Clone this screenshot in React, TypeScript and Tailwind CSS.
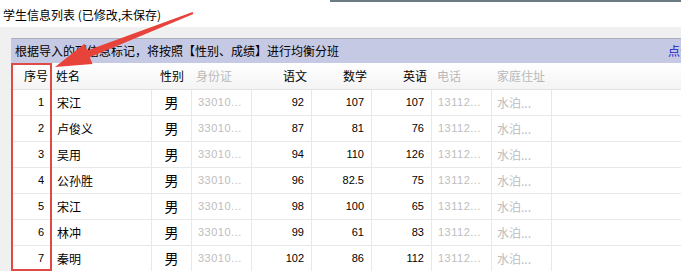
import React from "react"

const rows = [
  { no: 1, name: "宋江", chinese: "92", math: "107", english: "107" },
  { no: 2, name: "卢俊义", chinese: "87", math: "81", english: "76" },
  { no: 3, name: "吴用", chinese: "94", math: "110", english: "126" },
  { no: 4, name: "公孙胜", chinese: "96", math: "82.5", english: "75" },
  { no: 5, name: "宋江", chinese: "98", math: "100", english: "65" },
  { no: 6, name: "林冲", chinese: "99", math: "61", english: "83" },
  { no: 7, name: "秦明", chinese: "102", math: "86", english: "112" },
]

const cjk = "font-['SimSun','Noto_Sans_CJK_SC',sans-serif]"
const num = "font-['Liberation_Sans','Noto_Sans_CJK_SC',sans-serif]"
const cols = "grid grid-cols-[41px_100px_40px_60px_60px_60px_60px_60px_60px_1fr]"

function Arrow() {
  // annotation arrow pointing at the 序号 column
  return (
    <svg className="pointer-events-none absolute left-0 top-0" width="681" height="271">
      <polygon
        points="55,67 92.5,64.1 89.8,57.2 193.4,13.9 192.6,12.1 87.2,50.6 84.5,43.7"
        fill="#e8433b"
      />
    </svg>
  )
}

export default function App() {
  return (
    <div className={`relative h-[271px] w-[681px] overflow-hidden bg-white text-[12px] text-black ${cjk}`}>
      <div className="flex h-[2px]">
        <div className="w-[330px]" />
        <div className="flex-1 bg-[#6b7a83]" />
      </div>
      <div className="flex h-[25px] items-center pl-[3px]">学生信息列表 (已修改,未保存)</div>
      <div className="h-[11px] bg-[#f0f0f0]" />

      <div className="flex bg-[#f0f0f0]">
        <div className="w-[11px] shrink-0" />
        <div className="min-w-0 flex-1">
          <div className="flex h-[25px] items-center border-t border-[#a7b0bb] bg-[#c6c9e3] pl-[4px]">
            <span className="flex-1 whitespace-nowrap">根据导入的列信息标记，将按照【性别、成绩】进行均衡分班</span>
            <span className="w-[13px] shrink-0 overflow-hidden whitespace-nowrap text-[#1a1acc]">点击</span>
          </div>

          <div className={`${cols} h-[27px] items-center border-b border-[#e2e2e2] bg-gradient-to-b from-white to-[#f4f4f4]`}>
            <div className="pr-[4px] text-right">序号</div>
            <div className="pl-[4px]">姓名</div>
            <div className="text-center">性别</div>
            <div className="pl-[4px] text-[#b9b9b9]">身份证</div>
            <div className="pr-[5px] text-right">语文</div>
            <div className="pr-[5px] text-right">数学</div>
            <div className="pr-[5px] text-right">英语</div>
            <div className="pl-[5px] text-[#b9b9b9]">电话</div>
            <div className="pl-[5px] text-[#b9b9b9]">家庭住址</div>
            <div />
          </div>

          {rows.map((r) => (
            <div key={r.no} className={`${cols} h-[26px] border-b border-[#e8e8e8] bg-white`}>
              <div className={`flex items-center justify-end border-r border-[#e8e8e8] pr-[7px] ${num} text-[11px]`}>{r.no}</div>
              <div className="flex items-center border-r border-[#e8e8e8] pl-[5px]">{r.name}</div>
              <div className="flex items-center justify-center border-r border-[#e8e8e8] text-[14px]">男</div>
              <div className={`flex items-center border-r border-[#e8e8e8] pl-[6px] ${num} text-[11px] tracking-[0.5px] text-[#bdbdbd]`}>33010...</div>
              <div className={`flex items-center justify-end border-r border-[#e8e8e8] pr-[7px] ${num} text-[11px]`}>{r.chinese}</div>
              <div className={`flex items-center justify-end border-r border-[#e8e8e8] pr-[7px] ${num} text-[11px]`}>{r.math}</div>
              <div className={`flex items-center justify-end border-r border-[#e8e8e8] pr-[7px] ${num} text-[11px]`}>{r.english}</div>
              <div className={`flex items-center border-r border-[#e8e8e8] pl-[6px] ${num} text-[11px] tracking-[0.5px] text-[#bdbdbd]`}>13112...</div>
              <div className="flex items-center border-r border-[#e8e8e8] pl-[5px] text-[#bdbdbd]">水泊...</div>
              <div />
            </div>
          ))}
        </div>
      </div>

      <div className="pointer-events-none absolute left-[11px] top-[63px] h-[208px] w-[41px] border-2 border-[#e04a45]" />
      <Arrow />
    </div>
  )
}
